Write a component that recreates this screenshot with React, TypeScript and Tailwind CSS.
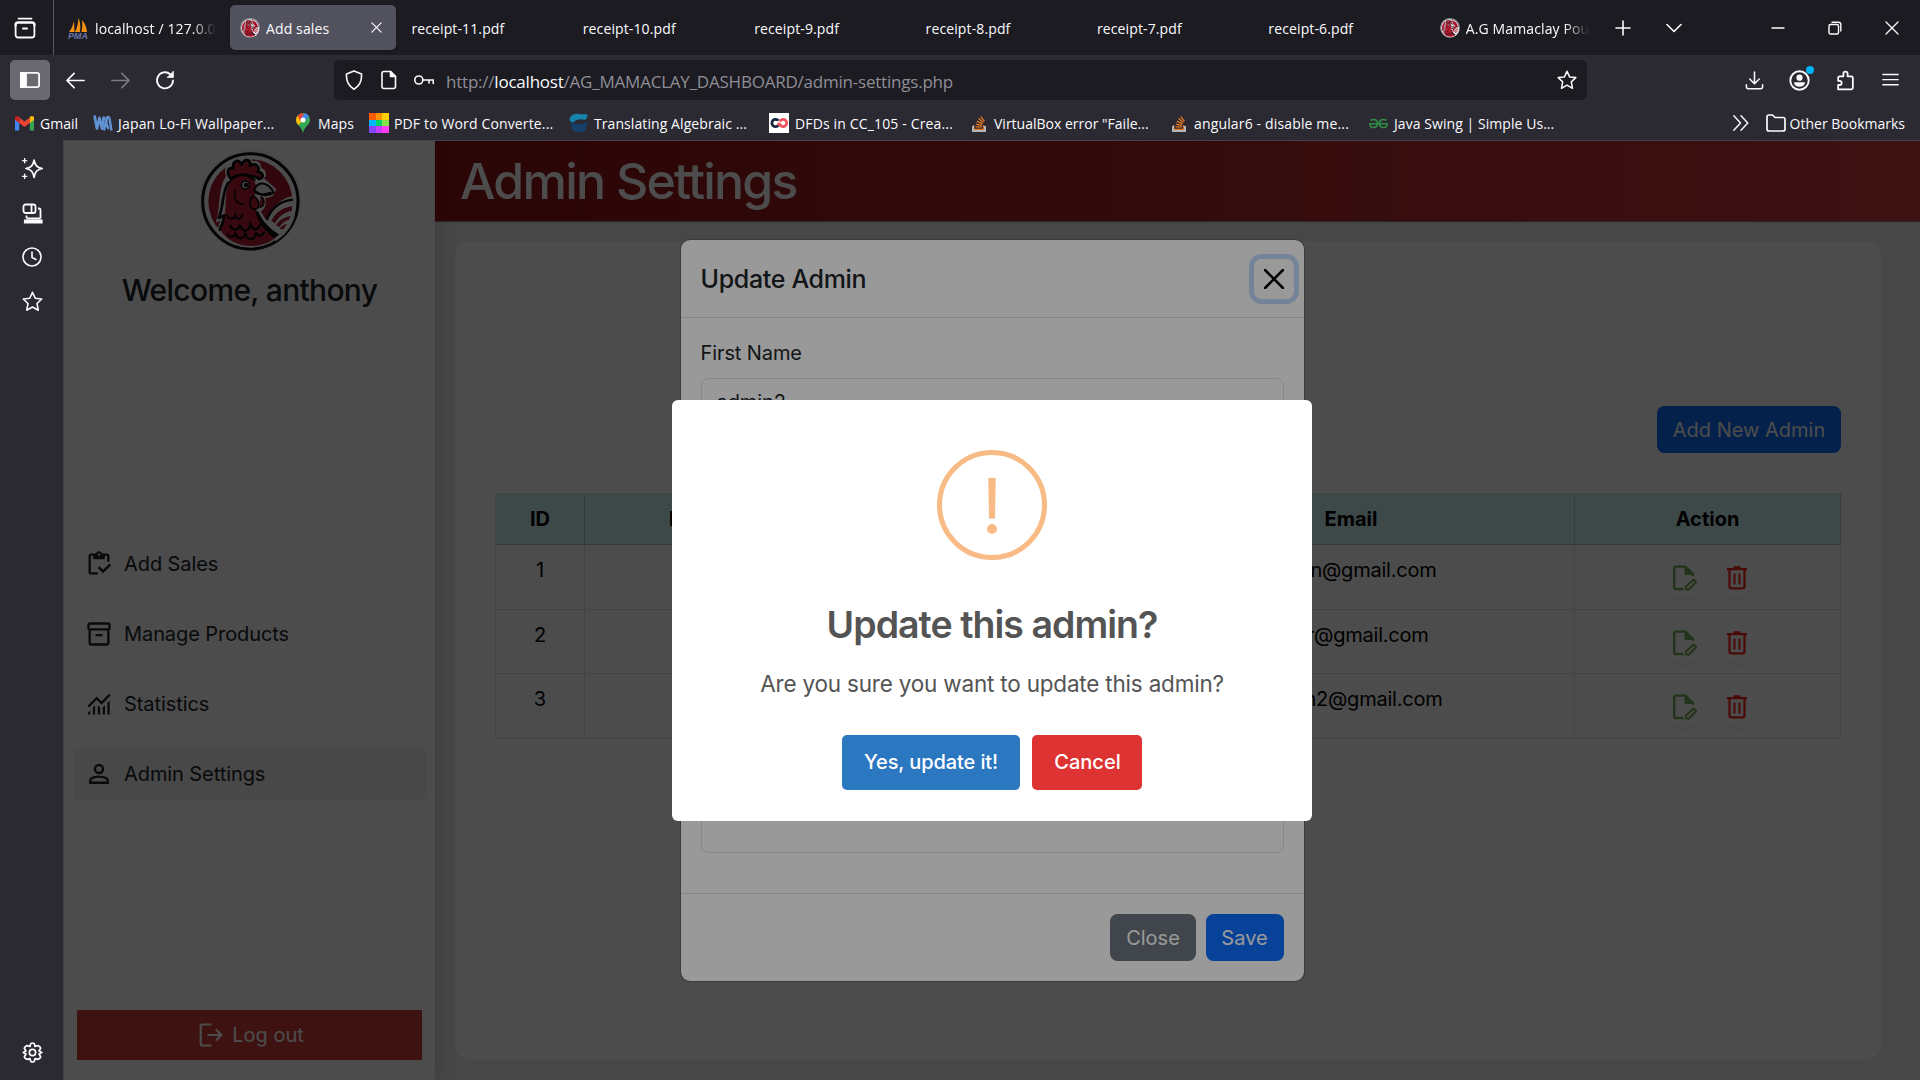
import type { ReactNode, SVGProps } from "react";
import { MdOutlineInventory, MdOutlineInventory2 } from "react-icons/md";
import { FaStackOverflow } from "react-icons/fa";
import { SiGeeksforgeeks } from "react-icons/si";

const UI = "font-['Open_Sans','Noto_Sans',sans-serif]";

function Line({ size = 20, children, ...rest }: { size?: number; children: ReactNode } & SVGProps<SVGSVGElement>) {
  return (
    <svg width={size} height={size} viewBox="0 0 20 20" fill="none" stroke="currentColor" strokeWidth={1.6} strokeLinecap="round" strokeLinejoin="round" {...rest}>
      {children}
    </svg>
  );
}

function Rooster({ size, crop = "0 0 330 330" }: { size: number; crop?: string }) {
  return (
    <svg width={size} height={size} viewBox={crop} className="shrink-0">
      <circle cx="163" cy="163" r="151" fill="#fff" stroke="#e2e2e2" strokeWidth="2" />
      <circle cx="163" cy="166" r="143" fill="#fff" stroke="#0b0b0f" strokeWidth="9" />
      <circle cx="163" cy="166" r="126" fill="#a8142f" />
      <path d="M205 262 C206 205 248 150 300 150 L296 210 C285 250 262 270 240 285Z" fill="#fff" />
      <path d="M212 222 C228 182 258 164 291 161" fill="none" stroke="#0b0b0f" strokeWidth="7" />
      <path d="M226 224 C240 198 262 184 289 181 L287 195 C265 198 248 212 237 232Z" fill="#a8142f" />
      <path d="M240 238 C250 222 265 213 284 210 L278 222 C266 224 256 234 250 243Z" fill="#a8142f" />
      <path d="M250 249 C257 239 264 236 272 234 L262 250Z" fill="#a8142f" />
      <path d="M92 90 C84 66 96 54 108 58 C106 36 126 32 136 44 C146 28 166 34 168 48 C182 42 196 52 194 68 C210 72 212 92 200 96 L238 130 C236 150 222 154 206 154 C210 180 200 192 192 196 C206 226 230 244 254 264 C200 318 110 314 66 254 L76 220 L62 226 C76 190 66 130 92 90Z" fill="#fff" stroke="#fff" strokeWidth="4" strokeLinejoin="round" />
      <path d="M104 98 C88 80 98 60 112 68 C108 42 128 38 137 56 C146 34 166 40 162 60 C178 48 194 62 185 78 C202 78 206 96 190 99 C166 84 130 80 104 98Z" fill="#c02438" stroke="#0b0b0f" strokeWidth="8" strokeLinejoin="round" />
      <path d="M150 86 C118 84 98 104 93 132 C86 160 92 186 84 210 C80 230 76 240 72 250 C104 308 192 316 242 272 C216 250 196 224 186 198 C174 190 168 170 176 152 L180 118 C174 100 164 90 150 86Z" fill="#b81c32" />
      <path d="M98 108 C76 140 84 184 68 216 L84 208 C84 226 76 240 70 254" fill="none" stroke="#0b0b0f" strokeWidth="8" strokeLinejoin="round" />
      <path d="M98 112 C114 84 150 78 178 104" fill="none" stroke="#0b0b0f" strokeWidth="6" />
      <path d="M186 196 C200 228 224 250 250 266 L234 276 C208 258 188 232 178 198Z" fill="#0b0b0f" />
      <path d="M117 132 C112 162 124 176 146 174" fill="none" stroke="#0b0b0f" strokeWidth="5" />
      <circle cx="148" cy="117" r="12" fill="#fff" stroke="#0b0b0f" strokeWidth="5" />
      <circle cx="150" cy="117" r="7" fill="#0b0b0f" />
      <path d="M174 132 C186 104 214 106 234 140 C214 152 192 148 174 132Z" fill="#eee" stroke="#0b0b0f" strokeWidth="6" strokeLinejoin="round" />
      <path d="M176 138 C194 150 212 146 226 140" fill="none" stroke="#0b0b0f" strokeWidth="7" />
      <path d="M172 150 C154 164 162 192 178 190 C196 182 190 160 172 150Z" fill="#c02438" stroke="#0b0b0f" strokeWidth="5" />
      <path d="M194 152 C210 160 204 186 190 182" fill="#c02438" stroke="#0b0b0f" strokeWidth="5" />
      <path d="M92 206 C98 222 114 222 118 208 C122 224 138 220 140 204" fill="none" stroke="#0b0b0f" strokeWidth="6" />
      <path d="M102 236 C108 256 128 254 132 236 C138 260 158 258 163 236 C170 256 190 252 192 234" fill="none" stroke="#0b0b0f" strokeWidth="7" />
      <path d="M94 264 C102 276 114 274 118 262 C124 282 142 280 148 262 C154 286 176 284 180 262 C188 272 200 270 206 258" fill="none" stroke="#0b0b0f" strokeWidth="7" />
    </svg>
  );
}

function Tab({ icon, label, fade, active, first }: { icon?: ReactNode; label: string; fade?: boolean; active?: boolean; first?: boolean }) {
  return (
    <div className={`flex shrink-0 items-center ${first ? "w-[172px]" : "w-[171.4px]"}`}>
      <div className={`flex h-[45px] w-[166px] items-center rounded-[5px] pl-2.5 pr-[13px] ${active ? "bg-[#52525e] shadow" : ""}`}>
        {icon && <span className="mr-[6px] mt-px shrink-0">{icon}</span>}
        <span className={`mt-0.5 whitespace-nowrap ${fade ? "[mask-image:linear-gradient(90deg,#000_80%,transparent)]" : ""}`}>{label}</span>
        {active && (
          <Line size={13} viewBox="0 0 14 14" strokeWidth={1.3} className="ml-auto">
            <path d="M2 2 L12 12 M12 2 L2 12" />
          </Line>
        )}
      </div>
    </div>
  );
}

function TabStrip() {
  return (
    <div className="flex h-[55px] shrink-0 bg-[#1c1b22] text-[14px] tracking-[0.12px] text-[#fbfbfe]">
      <div className="flex w-[54px] items-center justify-center border-r border-[#5a5963] pr-1">
        <svg width="22" height="22" viewBox="0 0 22 22" fill="none" stroke="#fbfbfe" strokeWidth="1.8" strokeLinecap="round">
          <path d="M4.500 1.600 H17.500" />
          <rect x="1.600" y="5.500" width="18.800" height="15" rx="2.500" />
          <path d="M1.600 8.500 V7.500 Q1.600 5.500 3.600 5.500 H18.400 Q20.400 5.500 20.400 7.500 V8.500" strokeWidth="2.200" />
          <path d="M9 11.500 H13" strokeWidth="2" />
        </svg>
      </div>
      <div className="flex pl-1">
        <Tab
          first
          fade
          label="localhost / 127.0.0"
          icon={
            <svg width="21" height="21" viewBox="0 0 21 21">
              <path d="M1 14 C4 10 5 7 6 3 L6.500 14Z M7 14 C9.500 9 10 5 10.500 0 C12.500 4 12.500 9 12 14Z M13.500 14 C14.500 9 14.500 6 14 2 C17 5 18.500 9 19 14Z" fill="#f29111" />
              <text x="0" y="20.500" fontSize="8.500" fontWeight="700" fontStyle="italic" fill="#6c78af" textLength="20" lengthAdjust="spacingAndGlyphs" fontFamily="Liberation Sans">PMA</text>
            </svg>
          }
        />
        <Tab active label="Add sales" icon={<Rooster size={20} crop="8 10 310 310" />} />
        {[11, 10, 9, 8, 7, 6].map((n) => (
          <Tab key={n} label={`receipt-${n}.pdf`} />
        ))}
        <Tab fade label="A.G Mamaclay Pou" icon={<Rooster size={20} crop="8 10 310 310" />} />
      </div>
      <div className="ml-[14px] flex items-center gap-[35px]">
        <Line size={16} viewBox="0 0 16 16" strokeWidth={1.6}><path d="M8 1 V15 M1 8 H15" /></Line>
        <Line size={16} viewBox="0 0 16 16" strokeWidth={1.6}><path d="M1 4.500 L8 11.500 L15 4.500" /></Line>
      </div>
      <div className="ml-auto flex items-center gap-[43px] pr-[21px]">
        <Line size={14} viewBox="0 0 14 14" strokeWidth={1.3}><path d="M1 7 H13" /></Line>
        <Line size={14} viewBox="0 0 14 14" strokeWidth={1.4}>
          <rect x="1" y="3.500" width="9.500" height="9.500" rx="1.500" />
          <path d="M4 1.200 H10.500 Q12.800 1.200 12.800 3.500 V10" />
        </Line>
        <Line size={14} viewBox="0 0 14 14" strokeWidth={1.3}><path d="M1 1 L13 13 M13 1 L1 13" /></Line>
      </div>
    </div>
  );
}

function Star({ size = 21 }: { size?: number }) {
  return (
    <Line size={size} strokeWidth={1.5}>
      <path d="M10 1.200 L12.600 6.900 L18.800 7.600 L14.300 11.900 L15.500 18.300 L10 15.200 L4.500 18.300 L5.700 11.900 L1.200 7.600 L7.400 6.900Z" />
    </Line>
  );
}

function Toolbar() {
  return (
    <div className="flex h-[50px] shrink-0 items-center bg-[#2b2a33] text-[#fbfbfe]">
      <div className="ml-2.5 flex h-10 w-10 items-center justify-center rounded-[5px] bg-[#6a6972]">
        <svg width="20" height="16" viewBox="0 0 20 16" fill="none" stroke="currentColor" strokeWidth="1.800">
          <rect x="0.900" y="0.900" width="18.200" height="14.200" rx="2" />
          <path d="M1 1 H6 V15 H1Z" fill="currentColor" />
        </svg>
      </div>
      <div className="ml-4 flex items-center gap-[26px]">
        <Line size={19} strokeWidth={1.8}><path d="M19 10 H1.500 M8.500 2.500 L1 10 L8.500 17.500" /></Line>
        <Line size={19} strokeWidth={1.8} className="text-[#7b7a83]"><path d="M1 10 H18.500 M11.500 2.500 L19 10 L11.500 17.500" /></Line>
        <Line size={20} strokeWidth={1.8} className="-ml-px">
          <path d="M18 10.500 A8 8 0 1 1 15.200 4.200 L17 6" />
          <path d="M18.400 1.500 V7.400 H12.500Z" fill="currentColor" strokeWidth="0.800" />
        </Line>
      </div>
      <div className="ml-[159px] flex h-10 w-[1253px] items-center rounded-[5px] bg-[#1c1b22] pl-[10px] pr-[10px]">
        <Line size={20}><path d="M10 0.900 L17.500 4 C18 10.500 15.500 16 10 19.200 C4.500 16 2 10.500 2.500 4Z" /></Line>
        <Line size={20} className="ml-[15px]">
          <path d="M5 1.500 H11.500 L16.500 6.500 V16.500 Q16.500 18.500 14.500 18.500 H5 Q3 18.500 3 16.500 V3.500 Q3 1.500 5 1.500Z" />
          <path d="M11.500 1.500 V6.500 H16.500Z" fill="currentColor" />
        </Line>
        <Line size={20} className="ml-[15px]">
          <circle cx="4.800" cy="10" r="4" />
          <path d="M9 10 H19.300 V13.500 M15 10 V13" />
        </Line>
        <div className="ml-[12px] pt-[3px] text-[17px] leading-6 tracking-[-0.22px] text-[#8f8e96]">
          http://<span className="text-[#fbfbfe]">localhost</span>/AG_MAMACLAY_DASHBOARD/admin-settings.php
        </div>
        <div className="ml-auto"><Star size={20} /></div>
      </div>
      <div className="ml-auto mr-[21px] flex items-center">
        <Line size={19} className="mr-[25px]"><path d="M10 1 V13 M5 8.500 L10 13.500 L15 8.500 M1.500 14.500 V16.500 Q1.500 18.600 3.500 18.600 H16.500 Q18.500 18.600 18.500 16.500 V14.500" /></Line>
        <div className="relative mr-[25px]">
          <svg width="21" height="21" viewBox="0 0 21 21" fill="none">
            <circle cx="10.500" cy="10.500" r="9.200" stroke="currentColor" strokeWidth="1.900" />
            <circle cx="10.500" cy="7.700" r="3.100" fill="currentColor" />
            <path d="M4.800 12.200 H16.200 C15.700 15.400 13.400 16.800 10.500 16.800 C7.600 16.800 5.300 15.400 4.800 12.200Z" fill="currentColor" />
          </svg>
          <span className="absolute -right-1 -top-1 h-2 w-2 rounded-full bg-[#00b3f4]" />
        </div>
        <Line size={21} strokeWidth={1.700} className="mr-[26px]">
          <path d="M3 18.500 V14.300 H4.300 A2 2 0 0 0 4.300 10.300 H3 V7.500 Q3 6 4.500 6 H8 V3.500 A2 2 0 0 1 12 3.500 V6 H15.500 Q17 6 17 7.500 V17 Q17 18.500 15.500 18.500Z" />
        </Line>
        <Line size={17} strokeWidth={1.700}><path d="M1 3 H19 M1 9 H19 M1 15 H19" /></Line>
      </div>
    </div>
  );
}

const RAINBOW = ["bg-[#ff5a00]", "bg-[#ff9100]", "bg-[#ffce00]", "bg-[#00b8ff]", "bg-[#00d36a]", "bg-[#84e04b]", "bg-[#8547ff]", "bg-[#c53dff]", "bg-[#ff3df0]"];

const BOOKMARKS: { label: string; width: string; gap: string; track: string; icon: ReactNode }[] = [
  {
    label: "Gmail", width: "w-[78px]", gap: "w-[25px]", track: "tracking-normal",
    icon: (
      <svg width="19" height="15" viewBox="0 0 19 15">
        <path d="M0 2 V14.500 H4.200 V6Z" fill="#4285f4" />
        <path d="M19 2 V14.500 H14.800 V6Z" fill="#34a853" />
        <path d="M4.200 1.500 L9.500 5.500 L14.800 1.500 V7 L9.500 11 L4.200 7Z" fill="#ea4335" />
        <path d="M0 2 C0 0 2.500 -0.600 4.200 1 V7 L0 4Z" fill="#c5221f" />
        <path d="M19 2 C19 0 16.500 -0.600 14.800 1 V7 L19 4Z" fill="#fbbc04" />
      </svg>
    ),
  },
  {
    label: "Japan Lo-Fi Wallpaper...", width: "w-[203px]", gap: "w-[25px]", track: "tracking-[0.18px]",
    icon: (
      <svg width="20" height="17" viewBox="0 0 20 17" fill="none" stroke="#5f93d6" strokeWidth="2.800" strokeLinejoin="round">
        <path d="M1.500 0.500 L4 13.500 L6.500 3 L9 13.500 L11 1.500" />
        <path d="M11 15.500 L13.500 3.500 Q15 0.500 16.500 3.500 L18.500 15.500 M13.500 4 V9 L15.500 14" strokeWidth="2.400" />
      </svg>
    ),
  },
  {
    label: "Maps", width: "w-[73px]", gap: "w-[22px]", track: "tracking-[0.1px]",
    icon: (
      <svg width="14" height="20" viewBox="0 0 14 20">
        <path d="M7 0 A7 7 0 0 1 14 7 C14 12 8.500 13 7 20 C5.500 13 0 12 0 7 A7 7 0 0 1 7 0Z" fill="#34a853" />
        <path d="M0.600 9.500 A7 7 0 0 1 1.500 2.700 L7 7 L2.300 12.300Z" fill="#fbbc04" />
        <path d="M1.500 2.700 A7 7 0 0 1 7 0 L8 4 L4.300 8Z" fill="#ea4335" />
        <path d="M7 0 A7 7 0 0 1 12.800 3.200 L9 8 L5.500 4.500 L9 0.400Z" fill="#4285f4" />
        <circle cx="7" cy="7" r="2.500" fill="#fff" />
      </svg>
    ),
  },
  {
    label: "PDF to Word Converte...", width: "w-[200px]", gap: "w-[25px]", track: "tracking-[0.14px]",
    icon: (
      <div className="grid h-5 w-5 grid-cols-3">
        {RAINBOW.map((c) => <span key={c} className={c} />)}
      </div>
    ),
  },
  {
    label: "Translating Algebraic ...", width: "w-[200px]", gap: "w-[25px]", track: "tracking-[0.08px]",
    icon: (
      <svg width="20" height="20" viewBox="0 0 20 20">
        <path d="M0.500 6 C2 1 8 -0.500 13 1.500 C15 0.500 18 1 19 2.500 L17 6 L16 7 C12 5.500 8 6 4 9.500 C2 9.500 0.500 8 0.500 6Z" fill="#1583ac" />
        <path d="M2 9 C6 12 14 12 18 9 L17 16 C13 21 6 20.500 3 16Z" fill="#15406b" />
      </svg>
    ),
  },
  {
    label: "DFDs in CC_105 - Crea...", width: "w-[203px]", gap: "w-[26px]", track: "tracking-[0.15px]",
    icon: (
      <svg width="20" height="20" viewBox="0 0 20 20" fill="none" strokeWidth="2.800">
        <rect width="20" height="20" fill="#fff" />
        <path d="M9.400 7.600 A3.700 3.700 0 1 0 9.400 12.400" stroke="#16283f" />
        <path d="M10.800 8.600 A3.600 3.600 0 1 1 10.800 11.400 Q10 10 9 12.500" stroke="#f0505c" />
      </svg>
    ),
  },
  { label: 'VirtualBox error "Faile...', width: "w-[200px]", gap: "w-[22px]", track: "tracking-[0px]", icon: <StackIcon /> },
  { label: "angular6 - disable me...", width: "w-[197px]", gap: "w-[22px]", track: "tracking-[0.15px]", icon: <StackIcon /> },
  { label: "Java Swing | Simple Us...", width: "w-[200px]", gap: "w-[25px]", track: "tracking-[0.06px]", icon: <SiGeeksforgeeks size={19} color="#2f8d46" /> },
];

function StackIcon() {
  return (
    <span className="relative block h-[17px] w-[14px] overflow-hidden">
      <FaStackOverflow size={16} color="#e87722" className="-ml-px" />
      <span className="absolute bottom-0 left-0 h-[6px] w-[14px] border-2 border-t-0 border-[#b3b6ba]" />
    </span>
  );
}

function BookmarksBar() {
  return (
    <div className="flex h-[35px] shrink-0 items-center bg-[#2b2a33] pl-[15px] pr-[15px] pt-px text-[14px] text-[#fbfbfe]">
      {BOOKMARKS.map((b) => (
        <div key={b.label} className={`flex shrink-0 items-center whitespace-nowrap ${b.width} ${b.track}`}>
          <span className={`shrink-0 ${b.gap}`}>{b.icon}</span>
          {b.label}
        </div>
      ))}
      <div className="ml-auto flex items-center whitespace-nowrap">
        <Line size={18} className="mr-4"><path d="M2 2 L9.500 10 L2 18 M10 2 L17.500 10 L10 18" /></Line>
        <Line size={20} strokeWidth={1.700} className="mr-[4px]">
          <path d="M1 4 Q1 2 3 2 H6.500 L9 4.500 H17 Q19 4.500 19 6.500 V16 Q19 18 17 18 H3 Q1 18 1 16Z" />
        </Line>
        Other Bookmarks
      </div>
    </div>
  );
}

function Launcher() {
  return (
    <div className="flex w-[63px] shrink-0 flex-col items-center bg-[#2b2a33] pb-[17px] pr-px pt-[18px] text-[#fbfbfe]">
      <Line size={21} strokeWidth={1.700} className="ml-0.5">
        <path d="M11.500 2 C12.500 7 14 8.800 19.300 10 C14 11.200 12.500 13 11.500 18.500 C10.500 13 9 11.200 3.800 10 C9 8.800 10.500 7 11.500 2Z" />
        <path d="M2.500 0.500 V4.500 M0.500 2.500 H4.500 M2.500 15.500 V19.500 M0.500 17.500 H4.500" strokeWidth="1.300" />
      </Line>
      <svg width="21" height="21" viewBox="0 0 21 21" fill="none" stroke="currentColor" strokeWidth="1.800" className="ml-[3px] mt-[24px]">
        <rect x="1.500" y="1.500" width="12" height="8.500" rx="2" />
        <path d="M9.500 1.500 V10" />
        <path d="M4.500 12.500 V15 M16 5.500 H17 Q18.500 5.500 18.500 7 V15.500 M4.500 15.500 H18.500" />
        <path d="M2.500 17 H20 V20 H2.500Z" fill="currentColor" strokeWidth="1.200" />
      </svg>
      <Line size={20} className="ml-px mt-[23px]"><circle cx="10" cy="10" r="9" /><path d="M10 5 V10.500 L14 12.500" /></Line>
      <div className="ml-0.5 mt-[24px]"><Star size={21} /></div>
      <svg width="21" height="21" viewBox="0 0 20 20" fill="none" stroke="currentColor" strokeWidth="1.600" strokeLinejoin="round" className="ml-0.5 mt-auto">
        <path d="M8.300 1.600 Q10 0.300 11.700 1.600 L12.400 4.300 L15.200 3.500 Q17.300 4 17.800 6 L16.200 8.600 L18.800 10 L16.200 11.400 L17.800 14 Q17.300 16 15.200 16.500 L12.400 15.700 L11.700 18.400 Q10 19.700 8.300 18.400 L7.600 15.700 L4.800 16.500 Q2.700 16 2.200 14 L3.800 11.400 L1.200 10 L3.800 8.600 L2.200 6 Q2.700 4 4.800 3.500 L7.600 4.300Z" />
        <circle cx="10" cy="10" r="3" />
      </svg>
    </div>
  );
}

const StatsIcon = () => (
  <svg width="24" height="24" viewBox="0 0 24 24" fill="currentColor">
    <path d="M1 22.500 V20.500 L3.300 18.200 V22.500Z M5.800 22.500 V15.500 L8.100 13.200 V22.500Z M10.800 22.500 V13.200 L13.100 15.500 V22.500Z M15.700 22.500 V15.500 L18 13.200 V22.500Z M20.400 22.500 V10.800 L22.700 8.500 V22.500Z" />
    <path d="M1.200 14.700 L9.800 6.200 L14.600 11 L22.800 2.500" fill="none" stroke="currentColor" strokeWidth="2.300" />
  </svg>
);
const PersonIcon = () => (
  <svg width="24" height="24" viewBox="0 0 24 24" fill="none" stroke="currentColor" strokeWidth="2.400">
    <circle cx="12" cy="7" r="4" />
    <path d="M3.200 20.800 V18.500 Q3.200 17 4.800 16.200 Q8.200 14.600 12 14.600 Q15.800 14.600 19.200 16.200 Q20.800 17 20.800 18.500 V20.800Z" />
  </svg>
);

const NAV: { label: string; icon: ReactNode; active?: boolean }[] = [
  { label: "Add Sales", icon: <MdOutlineInventory size={28} className="-m-0.5" /> },
  { label: "Manage Products", icon: <MdOutlineInventory2 size={28} className="-m-0.5" /> },
  { label: "Statistics", icon: <StatsIcon /> },
  { label: "Admin Settings", icon: <PersonIcon />, active: true },
];

function Sidebar() {
  return (
    <aside className="relative z-[1] flex w-[371px] shrink-0 flex-col bg-white text-[#212529] shadow-[0_0_20px_rgba(0,0,0,0.2)]">
      <div className="flex justify-center pl-0.5 pt-[5px]"><Rooster size={110} /></div>
      <h2 className="mt-[16px] text-center text-[30px] font-medium leading-[36px] tracking-[-0.68px]">Welcome, anthony</h2>
      <nav className="mt-[231px] flex flex-col gap-5 pl-[10px] pr-[8px]">
        {NAV.map((n) => (
          <div key={n.label} className={`flex h-[50px] items-center gap-[13px] pl-[13px] text-[20px] tracking-[-0.08px] ${n.active ? "bg-[#f0f0f0]" : ""}`}>
            {n.icon}
            <span>{n.label}</span>
          </div>
        ))}
      </nav>
      <div className="mb-5 ml-[13px] mr-[13px] mt-auto flex h-[50px] items-center justify-center gap-[9px] bg-[#d43f3f] pl-1 text-[20px] text-white">
        <svg width="24" height="24" viewBox="0 0 24 24" fill="none" stroke="currentColor" strokeWidth="2.200">
          <path d="M12.500 1.500 H3.500 Q1.700 1.500 1.700 3.300 V20.700 Q1.700 22.500 3.500 22.500 H12.500 M8.500 12 H22 M17 6.500 L22.300 12 L17 17.500" />
        </svg>
        Log out
      </div>
    </aside>
  );
}

function ActionButtons() {
  return (
    <div className="flex items-center justify-center gap-[13px] pl-[5px]">
      <div className="flex h-10 w-10 items-center justify-center rounded-full shadow-[0_3px_10px_rgba(0,0,0,0.06)]">
        <svg width="26" height="26" viewBox="0 0 26 26" fill="none" stroke="#6fae55" strokeWidth="2.300" className="ml-0.5">
          <path d="M11.500 24 H4 Q2.200 24 2.200 22.200 V3.500 Q2.200 1.700 4 1.700 H13.500 L21 9 V11" />
          <path d="M13 1.700 V9.500 H21Z" fill="#6fae55" strokeWidth="1" />
          <path d="M14 24.500 V21.500 L21.500 14.500 L24 17 L17 24.500Z" strokeWidth="1.900" strokeLinejoin="round" />
        </svg>
      </div>
      <div className="flex h-10 w-10 items-center justify-center rounded-full text-[#f5261a] shadow-[0_3px_10px_rgba(0,0,0,0.06)]">
        <svg width="20" height="24" viewBox="0 0 20 24" fill="none" stroke="currentColor" strokeWidth="2.300">
          <path d="M0 3.200 H20 M6.500 1.500 H13.500" />
          <path d="M2.500 3.500 V20.500 Q2.500 22.400 4.400 22.400 H15.600 Q17.500 22.400 17.500 20.500 V3.500" />
          <path d="M7.500 7.500 V18.500 M12.500 7.500 V18.500" strokeWidth="2" />
        </svg>
      </div>
    </div>
  );
}

const ADMINS = [
  { id: 1, email: "admin@gmail.com", h: "h-[65px]" },
  { id: 2, email: "user@gmail.com", h: "h-[64px]" },
  { id: 3, email: "admin2@gmail.com", h: "h-[65px]" },
];

const COLS = "grid grid-cols-[89px_274px_269px_447px_266px]";

function Content() {
  return (
    <main className="flex min-w-0 flex-1 flex-col bg-[#eeeeee]">
      <header className="relative z-[2] flex h-20 shrink-0 items-center bg-linear-to-r from-[#8f1316] to-[#cf393f] pl-[25px] shadow-[0_1px_1px_rgba(0,0,0,0.4)]">
        <h1 className="text-[50px] font-medium leading-[60px] tracking-[-1.75px] text-white">Admin Settings</h1>
      </header>
      <section className="mb-5 ml-5 mr-[39px] mt-5 flex flex-1 flex-col rounded-[15px] bg-white pl-[40px] pr-[40px] pt-[165px] text-[20px] text-black">
        <div className="flex h-[47px] w-[184px] items-center justify-center self-end rounded-[7.500px] bg-[#0d6efd] text-white">Add New Admin</div>
        <div className="mt-[40px] border-l border-t border-[#dee2e6]">
          <div className={`${COLS} h-[51px] bg-[#cff3f6] text-center font-bold`}>
            {["ID", "First Name", "", "Email", "Action"].map((h, i) => (
              <div key={i} className="border-b border-r border-[#a8c8cc] pt-[10px] leading-[30px]">{h}</div>
            ))}
          </div>
          {ADMINS.map((a) => (
            <div key={a.id} className={`${COLS} ${a.h} text-center`}>
              <div className="border-b border-r border-[#dee2e6] pt-[10px] leading-[30px]">{a.id}</div>
              <div className="border-b border-r border-[#dee2e6]" />
              <div className="border-b border-r border-[#dee2e6]" />
              <div className="border-b border-r border-[#dee2e6] pt-[10px] leading-[30px] tracking-[-0.22px]">{a.email}</div>
              <div className="border-b border-r border-[#dee2e6] pt-[13px]"><ActionButtons /></div>
            </div>
          ))}
        </div>
      </section>
    </main>
  );
}

function UpdateModal() {
  return (
    <div className="absolute inset-0 flex items-start justify-center bg-black/50">
      <div className="mt-[98px] flex h-[743px] w-[625px] flex-col rounded-[10px] border border-black/20 bg-white bg-clip-padding text-[20px] text-[#212529]">
        <div className="flex h-[78px] shrink-0 items-center justify-between border-b border-[#dee2e6] pl-5 pr-[10px]">
          <h5 className="text-[25px] font-medium leading-[38px] tracking-[-0.33px]">Update Admin</h5>
          <div className="flex h-10 w-10 items-center justify-center rounded-[7.500px] text-black ring-[5px] ring-[#c2dbfe]">
            <Line size={20} strokeWidth={2.500}><path d="M1 1 L19 19 M19 1 L1 19" /></Line>
          </div>
        </div>
        <div className="flex flex-1 flex-col justify-between px-5 pb-10 pt-[20px]">
          <div>
            <div className="leading-[30px] tracking-[-0.1px]">First Name</div>
            <div className="mt-2.5 flex h-[47px] items-center rounded-[7.500px] border border-[#dee2e6] pl-[15px] tracking-[-0.1px]">admin2</div>
          </div>
          <div className="h-[47px] rounded-[7.500px] border border-[#dee2e6]" />
        </div>
        <div className="flex h-[88px] shrink-0 items-start justify-end gap-2.5 border-t border-[#dee2e6] pr-5 pt-5 text-white">
          <div className="flex h-[47px] w-[86px] items-center justify-center rounded-[7.500px] bg-[#6c757d] pl-px">Close</div>
          <div className="flex h-[47px] w-[78px] items-center justify-center rounded-[7.500px] bg-[#0d6efd]">Save</div>
        </div>
      </div>
    </div>
  );
}

function ConfirmDialog() {
  return (
    <div className="absolute inset-0 z-20 flex items-start justify-center bg-black/40">
      <div className="mt-[259px] flex h-[421px] w-[640px] flex-col items-center rounded-[6px] bg-white text-[#545454]">
        <svg width="110" height="110" viewBox="0 0 110 110" className="mt-[50px]" fill="#f8bb86">
          <circle cx="55" cy="55" r="52.500" fill="none" stroke="#f8bb86" strokeWidth="5" />
          <path d="M51.300 28 H58.700 L58 68.500 H52Z" />
          <circle cx="55" cy="79" r="5" />
        </svg>
        <h2 className="mt-[42px] text-[37.500px] font-semibold leading-[45px] tracking-[-0.98px]">Update this admin?</h2>
        <p className="mt-[20px] text-[22.500px] leading-[34px] tracking-[-0.2px]">Are you sure you want to update this admin?</p>
        <div className="mt-[34px] flex gap-3 text-[20px] font-medium text-white">
          <div className="flex h-[55px] w-[178px] items-center justify-center rounded-[5px] bg-[#2b77c0] pb-0.5 tracking-[-0.1px]">Yes, update it!</div>
          <div className="flex h-[55px] w-[110px] items-center justify-center rounded-[5px] bg-[#dd3333] pb-0.5 pl-px">Cancel</div>
        </div>
      </div>
    </div>
  );
}

export default function App() {
  return (
    <div className={`flex h-[1080px] w-[1920px] flex-col overflow-hidden bg-[#2b2a33] ${UI}`}>
      <TabStrip />
      <Toolbar />
      <BookmarksBar />
      <div className="flex min-h-0 flex-1">
        <Launcher />
        <div className="relative flex min-w-0 flex-1 overflow-hidden border-l border-t border-[#42414d] font-['Inter',sans-serif]">
          <Sidebar />
          <Content />
          <div className="absolute inset-0 z-10"><UpdateModal /></div>
          <ConfirmDialog />
        </div>
      </div>
    </div>
  );
}
